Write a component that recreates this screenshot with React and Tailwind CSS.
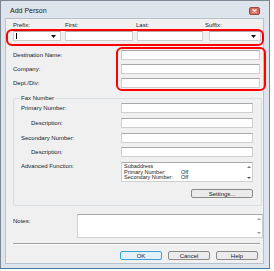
import React from 'react'

const font = { fontFamily: '"Liberation Sans", Arial, sans-serif' }

// sunken text box, the way the old Win7 dialog draws it
function Box({ className = '', children }) {
  return (
    <div className={`h-[10px] bg-white border border-[#cfcfcf] border-t-[#a9a9a9] ${className}`}>
      {children}
    </div>
  )
}

function Combo({ className = '', caret }) {
  return (
    <div className={`h-[10px] bg-white border border-[#cfcfcf] border-t-[#a9a9a9] flex items-center justify-between pl-[2px] pr-[4px] ${className}`}>
      <span className={`w-px h-[6px] ${caret ? 'bg-black' : ''}`} />
      <svg width="5" height="3" viewBox="0 0 5 3"><path d="M0 0h5L2.5 3z" fill="#111" /></svg>
    </div>
  )
}

function Btn({ children, active }) {
  return (
    <div
      className={`w-[42px] h-[9px] rounded-[2px] border flex items-center justify-center text-[6px] leading-none text-[#1a1a1a] ${
        active ? 'border-[#3c9fd8] bg-[#e3f0fa]' : 'border-[#8a8a8a] bg-[#ebebeb]'
      }`}
    >
      {children}
    </div>
  )
}

function Row({ label, indent = 0, top, labelW = 108, w = 'w-[139px]' }) {
  return (
    <div className="flex items-center" style={{ marginTop: top }}>
      <span className="text-[6px] leading-none text-[#1a1a1a]" style={{ paddingLeft: indent, width: labelW }}>
        {label}
      </span>
      <Box className={w} />
    </div>
  )
}

export default function App() {
  return (
    <div className="relative w-[274px] h-[271px] bg-white overflow-hidden" style={font}>
      {/* window frame */}
      <div className="w-[270px] h-[269px] bg-[#dde4ec] border border-[#7d8894] border-r-[#4a90c8] border-b-[#3f7f9a] flex flex-col">
        <div className="h-[17px] flex items-center justify-between pl-[9px] pr-[9px]">
          <span className="text-[7px] text-[#1c1c1c] pt-[4px]">Add Person</span>
          <div className="w-[11px] h-[8px] mt-[3px] rounded-[2px] bg-[#d56e62] border border-[#9a4a40] flex items-center justify-center">
            <svg width="5" height="4" viewBox="0 0 5 4"><path d="M0.5 0.5l4 3M4.5 0.5l-4 3" stroke="#fff" strokeWidth="1.1" /></svg>
          </div>
        </div>

        {/* client area */}
        <div className="ml-[4px] w-[259px] h-[246px] bg-[#f0f0f0] border border-[#b9c2cc] flex flex-col pl-[7px] text-[#1a1a1a]">
          <div className="flex text-[6px] leading-none mt-[3px]">
            <span className="w-[52px]">Prefix:</span>
            <span className="w-[71px]">First:</span>
            <span className="w-[69px]">Last:</span>
            <span>Suffix:</span>
          </div>
          <div className="flex mt-[3px] gap-[4px]">
            <Combo className="w-[48px]" caret />
            <Box className="w-[68px]" />
            <Box className="w-[66px]" />
            <div className="ml-[2px]"><Combo className="w-[52px]" /></div>
          </div>

          <Row label="Destination Name:" top={9} />
          <Row label="Company:" top={4} />
          <Row label="Dept./Div:" top={4} />

          {/* Fax Number group */}
          <div className="relative mt-[10px] w-[249px] h-[108px] border border-[#d5dfe5] rounded-[2px] flex flex-col">
            <span className="absolute -top-[4px] left-[6px] px-[1px] bg-[#f0f0f0] text-[6px] leading-none">Fax Number</span>
            <div className="flex flex-col pl-[7px]">
              <Row label="Primary Number:" top={4} labelW={100} w="w-[132px]" />
              <Row label="Description:" indent={10} top={5} labelW={100} w="w-[132px]" />
              <Row label="Secondary Number:" top={5} labelW={100} w="w-[132px]" />
              <Row label="Description:" indent={10} top={4} labelW={100} w="w-[132px]" />
              <div className="flex mt-[5px]">
                <span className="w-[100px] text-[6px] leading-none pt-[1px]">Advanced Function:</span>
                <div className="w-[132px] h-[20px] bg-white border border-[#cfcfcf] border-t-[#a9a9a9] flex text-[5.5px] leading-[5.6px] pl-[2px] pt-[1px]">
                  <div className="flex-1">
                    <div>Subaddress</div>
                    <div className="flex"><span className="w-[57px]">Primary Number:</span>Off</div>
                    <div className="flex"><span className="w-[57px]">Secondary Number:</span>Off</div>
                  </div>
                  <div className="w-[7px] flex flex-col justify-between items-center py-[2px]">
                    <svg width="4" height="2" viewBox="0 0 4 2"><path d="M0 2h4L2 0z" fill="#777" /></svg>
                    <svg width="4" height="2" viewBox="0 0 4 2"><path d="M0 0h4L2 2z" fill="#555" /></svg>
                  </div>
                </div>
              </div>
              <div className="flex mt-[7px] pl-[170px]">
                <div className="w-[62px] h-[9px] rounded-[2px] border border-[#8a8a8a] bg-[#ebebeb] flex items-center justify-center text-[6px] leading-none">
                  Settings...
                </div>
              </div>
            </div>
          </div>

          {/* Notes */}
          <div className="flex mt-[8px]">
            <span className="w-[64px] text-[6px] leading-none pt-[4px]">Notes:</span>
            <div className="w-[186px] h-[24px] bg-white border border-[#cfcfcf] border-t-[#a9a9a9] flex justify-end">
              <div className="w-[7px] flex flex-col justify-between items-center py-[3px]">
                <svg width="4" height="2" viewBox="0 0 4 2"><path d="M0 2h4L2 0z" fill="#999" /></svg>
                <svg width="4" height="2" viewBox="0 0 4 2"><path d="M0 0h4L2 2z" fill="#999" /></svg>
              </div>
            </div>
          </div>

          <div className="mt-[5px] w-[247px] h-[2px] border-t border-[#a0a0a0] border-b border-b-white" />

          <div className="flex gap-[6px] mt-[6px] pl-[107px]">
            <Btn active>OK</Btn>
            <Btn>Cancel</Btn>
            <Btn>Help</Btn>
          </div>
        </div>
      </div>

      {/* red callouts over the dialog */}
      <div className="absolute left-[6px] top-[29px] w-[258px] h-[17px] border-2 border-[#ff0000] rounded-[6px]" />
      <div className="absolute left-[116px] top-[47px] w-[150px] h-[44px] border-2 border-[#ff0000] rounded-[6px]" />
    </div>
  )
}
